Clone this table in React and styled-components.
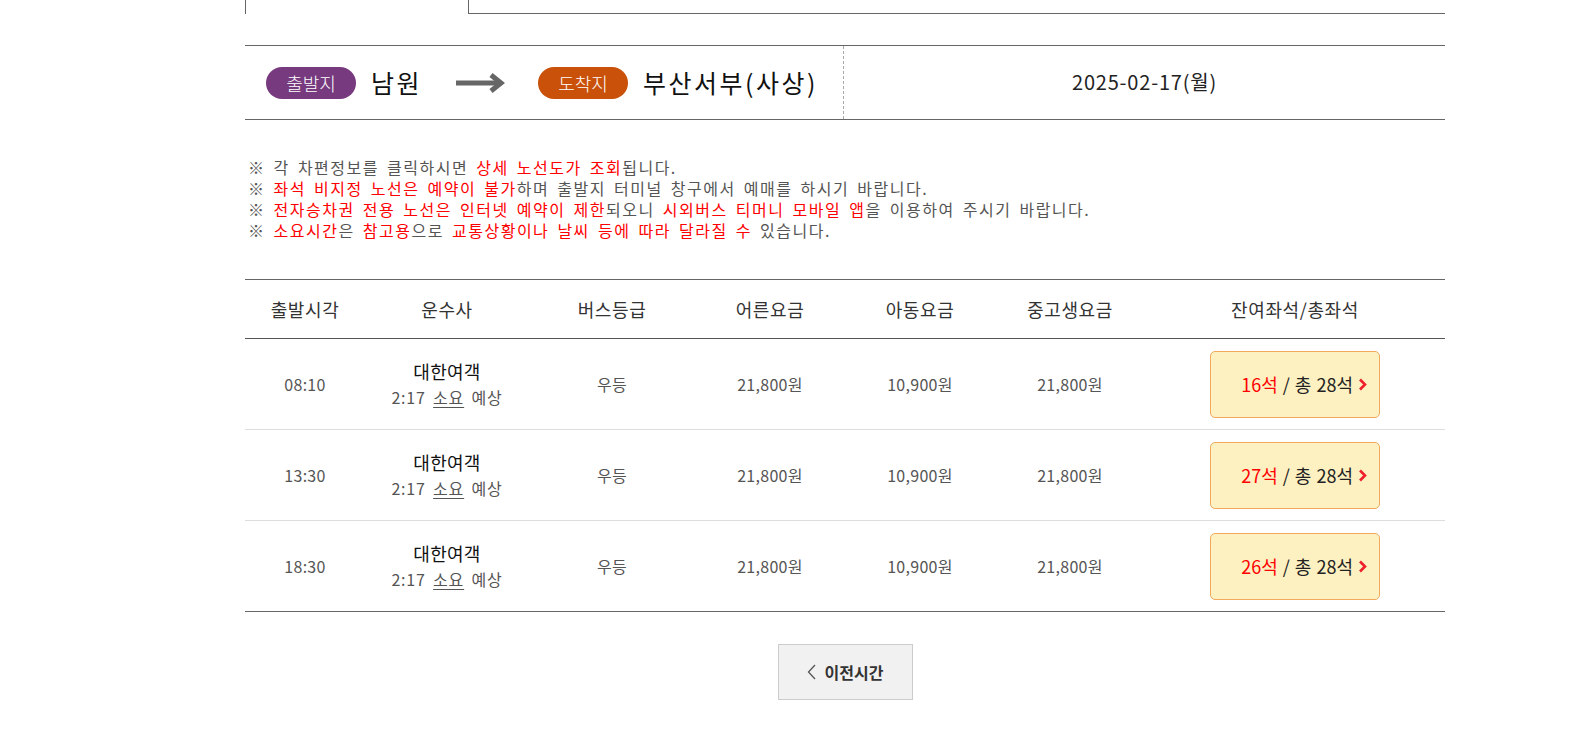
import React from 'react'
import styled, { createGlobalStyle } from 'styled-components'

const GlobalStyle = createGlobalStyle`
  body {
    margin: 0;
    background: #fff;
    font-family: "Noto Sans CJK KR", "Noto Sans", sans-serif;
    color: #333;
  }
`

const Wrapper = styled.div`
  width: 1200px;
  margin-left: 245px;
  padding-bottom: 40px;
`

const TabBar = styled.div`
  display: flex;
  height: 14px;
`

const ActiveTab = styled.div`
  width: 224px;
  box-sizing: border-box;
  border-left: 1px solid #666;
  border-right: 1px solid #666;
`

const TabRest = styled.div`
  flex: 1;
  box-sizing: border-box;
  border-bottom: 1px solid #666;
`

const Route = styled.div`
  display: flex;
  height: 75px;
  margin-top: 31px;
  box-sizing: border-box;
  border-top: 1px solid #666;
  border-bottom: 1px solid #666;
`

const Places = styled.div`
  width: 599px;
  display: flex;
  align-items: center;
  padding-left: 21px;
  box-sizing: border-box;
  border-right: 1px dashed #aaa;
`

const Badge = styled.span`
  width: 90px;
  height: 32px;
  border-radius: 16px;
  background: ${p => p.$bg};
  color: #fff;
  font-size: 18px;
  font-weight: 300;
  display: flex;
  align-items: center;
  justify-content: center;
  line-height: 1;
`

const Place = styled.span`
  font-size: 25px;
  color: #111;
  margin-left: 15px;
  letter-spacing: 2.5px;
  line-height: 1;
`

const ArrowIcon = styled.svg`
  margin: 0 32px 0 34px;
`

const DateBox = styled.div`
  flex: 1;
  display: flex;
  align-items: center;
  justify-content: center;
  font-size: 20px;
  letter-spacing: 0.8px;
  color: #222;
  padding-bottom: 3px;
`

const Notes = styled.ul`
  list-style: none;
  margin: 37px 0 0;
  padding: 0 0 0 3px;
  font-size: 16px;
  line-height: 21px;
  color: #555;
  letter-spacing: 1.5px;
  word-spacing: 3px;
`

const Red = styled.span`
  color: #f00;
`

const Table = styled.table`
  width: 100%;
  margin-top: 38px;
  border-collapse: collapse;
  border-top: 1px solid #666;
  table-layout: fixed;
`

const Th = styled.th`
  height: 58px;
  font-size: 18px;
  letter-spacing: 0.6px;
  font-weight: normal;
  color: #333;
  border-bottom: 1px solid #555;
  padding: 0;
`

const Row = styled.tr`
  &:last-child td {
    border-bottom-color: #666;
  }
`

const Td = styled.td`
  height: 90px;
  text-align: center;
  font-size: 16px;
  letter-spacing: 0.3px;
  color: #555;
  padding: 0;
  border-bottom: 1px solid #ddd;
`

const Company = styled.div`
  font-size: 18px;
  color: #111;
  line-height: 25px;
`

const Duration = styled.div`
  font-size: 16px;
  color: #555;
  line-height: 26px;
  letter-spacing: 0.8px;
  word-spacing: 3px;
  u {
    text-underline-offset: 3px;
  }
`

const SeatButton = styled.button`
  width: 170px;
  height: 67px;
  display: inline-flex;
  align-items: center;
  justify-content: flex-end;
  gap: 5px;
  padding: 0 12px 0 0;
  box-sizing: border-box;
  background: #fdf0c1;
  border: 1px solid #f3a95b;
  border-radius: 5px;
  font-family: inherit;
  font-size: 18px;
  word-spacing: 1px;
  color: #222;
  cursor: pointer;
`

const Left = styled.span`
  color: #f00;
`

const Pager = styled.div`
  display: flex;
  justify-content: center;
  margin-top: 32px;
`

const PrevButton = styled.button`
  width: 135px;
  height: 56px;
  display: flex;
  align-items: center;
  justify-content: center;
  gap: 9px;
  background: #f1f1f1;
  border: 1px solid #ccc;
  font-family: inherit;
  font-size: 16px;
  font-weight: bold;
  color: #333;
  cursor: pointer;
`

const cols = [120, 164, 166, 150, 150, 150, 300]
const heads = ['출발시각', '운수사', '버스등급', '어른요금', '아동요금', '중고생요금', '잔여좌석/총좌석']

const rows = [
  { time: '08:10', left: 16 },
  { time: '13:30', left: 27 },
  { time: '18:30', left: 26 },
]

function Chevron() {
  return (
    <svg width="9" height="13" viewBox="0 0 9 13">
      <path d="M2 1.5 L7 6.5 L2 11.5" fill="none" stroke="#f0202a" strokeWidth="2.6" />
    </svg>
  )
}

export default function App() {
  return (
    <>
      <GlobalStyle />
      <Wrapper>
        <TabBar>
          <ActiveTab />
          <TabRest />
        </TabBar>

        <Route>
          <Places>
            <Badge $bg="#773a7e">출발지</Badge>
            <Place>남원</Place>
            <ArrowIcon width="50" height="20" viewBox="0 0 50 20">
              <path d="M0 10 H44" stroke="#666" strokeWidth="5" />
              <path d="M35 2 L45 10 L35 18" fill="none" stroke="#666" strokeWidth="5" />
            </ArrowIcon>
            <Badge $bg="#c9510a">도착지</Badge>
            <Place>부산서부(사상)</Place>
          </Places>
          <DateBox>2025-02-17(월)</DateBox>
        </Route>

        <Notes>
          <li>※ 각 차편정보를 클릭하시면 <Red>상세 노선도가 조회</Red>됩니다.</li>
          <li>※ <Red>좌석 비지정 노선은 예약이 불가</Red>하며 출발지 터미널 창구에서 예매를 하시기 바랍니다.</li>
          <li>※ <Red>전자승차권 전용 노선은 인터넷 예약이 제한</Red>되오니 <Red>시외버스 티머니 모바일 앱</Red>을 이용하여 주시기 바랍니다.</li>
          <li>※ <Red>소요시간</Red>은 <Red>참고용</Red>으로 <Red>교통상황이나 날씨 등에 따라 달라질 수</Red> 있습니다.</li>
        </Notes>

        <Table>
          <colgroup>
            {cols.map((w, i) => <col key={i} style={{ width: w }} />)}
          </colgroup>
          <thead>
            <tr>
              {heads.map(h => <Th key={h}>{h}</Th>)}
            </tr>
          </thead>
          <tbody>
            {rows.map(r => (
              <Row key={r.time}>
                <Td>{r.time}</Td>
                <Td>
                  <Company>대한여객</Company>
                  <Duration>2:17 <u>소요</u> 예상</Duration>
                </Td>
                <Td>우등</Td>
                <Td>21,800원</Td>
                <Td>10,900원</Td>
                <Td>21,800원</Td>
                <Td>
                  <SeatButton>
                    <span><Left>{r.left}석</Left> / 총 28석</span>
                    <Chevron />
                  </SeatButton>
                </Td>
              </Row>
            ))}
          </tbody>
        </Table>

        <Pager>
          <PrevButton>
            <svg width="9" height="16" viewBox="0 0 9 16">
              <path d="M8 1 L1.5 8 L8 15" fill="none" stroke="#555" strokeWidth="1.3" />
            </svg>
            이전시간
          </PrevButton>
        </Pager>
      </Wrapper>
    </>
  )
}
